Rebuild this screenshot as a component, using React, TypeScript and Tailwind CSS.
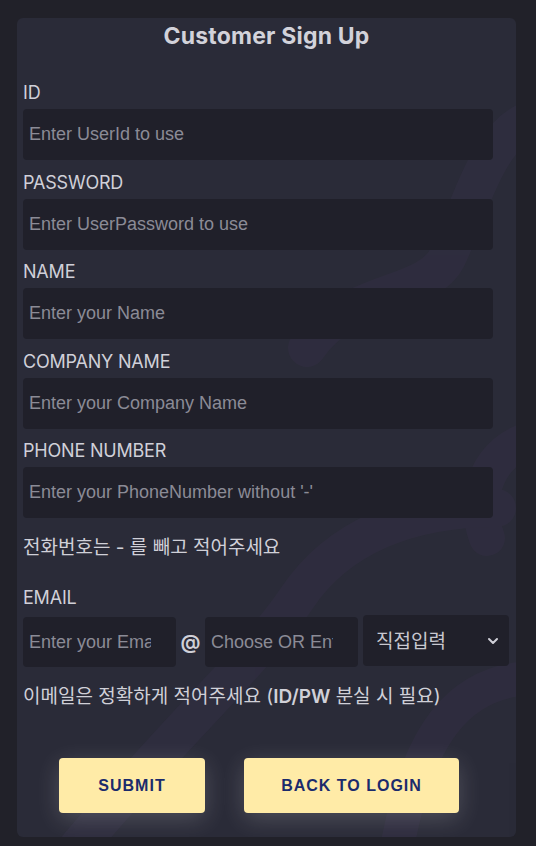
import React from "react";

const FIELDS = [
  { label: "ID", placeholder: "Enter UserId to use" },
  { label: "PASSWORD", placeholder: "Enter UserPassword to use" },
  { label: "NAME", placeholder: "Enter your Name" },
  { label: "COMPANY NAME", placeholder: "Enter your Company Name" },
  { label: "PHONE NUMBER", placeholder: "Enter your PhoneNumber without '-'" },
];

const inputCls =
  "rounded-[4px] bg-[#20202a] pl-[6px] text-[18px] text-[#e0e0e6] outline-none placeholder:text-[#8b8b96] font-['Liberation_Sans',Arial,sans-serif]";

const labelCls = "h-6 text-[18px] leading-6 tracking-[-0.2px] text-[#d0d0d8] font-['Inter','Noto_Sans_CJK_KR',sans-serif]";

function Swirls() {
  return (
    <svg className="pointer-events-none absolute inset-0" width="499" height="819" viewBox="0 0 499 819" fill="none">
      <g stroke="#322e42" strokeLinecap="round" opacity="0.6">
        <path d="M520 100 C 470 110, 450 200, 430 240 S 330 270, 290 330" strokeWidth="38" />
        <path d="M520 420 C 470 430, 455 480, 470 520" strokeWidth="36" />
        <path d="M480 490 C 390 490, 320 520, 280 580 S 170 700, 60 830" strokeWidth="38" />
        <path d="M520 660 C 440 660, 400 720, 380 830" strokeWidth="34" />
      </g>
    </svg>
  );
}

export default function App() {
  return (
    <div className="min-h-[846px] bg-[#212129] pt-[18px] pl-[17px] font-['Inter','Noto_Sans_CJK_KR',sans-serif]">
      <div className="relative h-[819px] w-[499px] overflow-hidden rounded-[6px] bg-[#2a2b38]">
        <Swirls />
        <div className="relative flex flex-col px-[6px]">
          <h1 className="mt-[4px] h-[28px] text-center text-[23px] font-bold leading-[28px] tracking-[0.2px] text-[#d2d2da]">
            Customer Sign Up
          </h1>
          <div className="mt-[31px] flex flex-col">
            {FIELDS.map((f, i) => (
              <div key={f.label} className={i > 0 ? "mt-[10.5px] flex flex-col" : "flex flex-col"}>
                <label className={labelCls}>{f.label}</label>
                <input className={`mt-[4px] h-[51px] w-[470px] pr-[6px] ${inputCls}`} placeholder={f.placeholder} />
              </div>
            ))}
          </div>
          <p className="mt-[18px] h-6 text-[19px] leading-6 text-[#d0d0d8]">전화번호는 - 를 빼고 적어주세요</p>
          <label className={`mt-[26px] ${labelCls}`}>EMAIL</label>
          <div className="mt-[5px] flex items-start">
            <input className={`mt-[2px] h-[50px] w-[153px] pr-[25px] ${inputCls}`} placeholder="Enter your Email" />
            <span className="mt-[12px] w-[29px] text-center text-[20px] font-semibold text-[#d0d0d8]">@</span>
            <input className={`mt-[2px] h-[50px] w-[153px] pr-[25px] ${inputCls}`} placeholder="Choose OR Enter" />
            <div className="relative ml-[5px] flex h-[51px] w-[146px] items-center rounded-[4px] bg-[#20202a] pl-[13px] text-[19px] text-[#c8c8d0] font-['Noto_Sans_CJK_KR',sans-serif]">
              직접입력
              <svg className="absolute right-[10px] top-[21px]" width="12" height="10" viewBox="0 0 12 10" fill="none">
                <path d="M2 3 L6 7 L10 3" stroke="#d0d0d8" strokeWidth="2" strokeLinecap="round" strokeLinejoin="round" />
              </svg>
            </div>
          </div>
          <p className="mt-[18px] h-6 text-[19px] leading-6 text-[#d0d0d8]">
            이메일은 정확하게 적어주세요 (<span className="font-semibold">ID/PW</span> 분실 시 필요)
          </p>
          <div className="mt-[49px] ml-[36px] flex gap-[39px]">
            {["SUBMIT", "BACK TO LOGIN"].map((t, i) => (
              <button
                key={t}
                className={`${i === 0 ? "w-[146px]" : "w-[215px]"} h-[55px] rounded-[4px] bg-[#ffeba7] text-[16px] font-bold tracking-[1px] text-[#1b2b6c] shadow-[0_6px_24px_rgba(255,255,255,0.18)] font-['Liberation_Sans',Arial,sans-serif]`}
              >
                {t}
              </button>
            ))}
          </div>
        </div>
      </div>
    </div>
  );
}
